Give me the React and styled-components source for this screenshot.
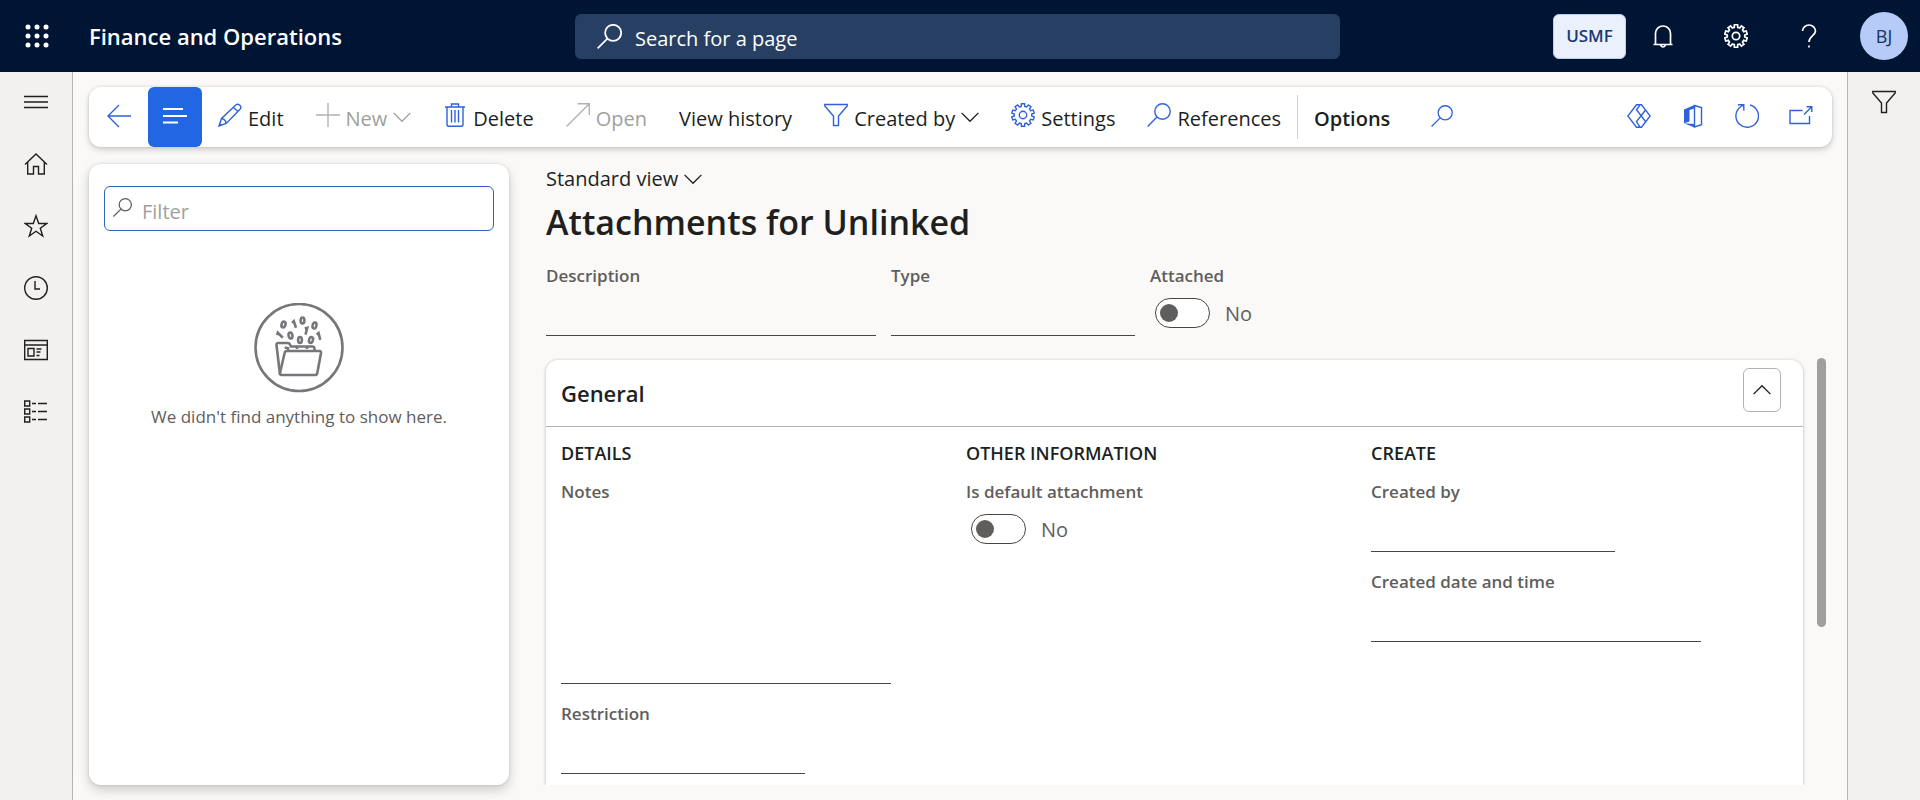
import React, { useState } from "react";
import styled, { createGlobalStyle } from "styled-components";

const GlobalStyle = createGlobalStyle`
  *, *::before, *::after { box-sizing: border-box; }
  body {
    margin: 0;
    background: #faf9f8;
    color: #201f1e;
    font-family: "Open Sans", "Noto Sans", sans-serif;
    font-size: 20px;
    line-height: 28px;
  }
  button, input, textarea { font: inherit; color: inherit; }
  button { margin: 0; padding: 0; border: 0; background: none; cursor: pointer; }
  h1, h2, h3, p { margin: 0; }
`;

const Svg = styled.svg`
  display: block;
  flex: none;
  fill: none;
  stroke: currentColor;
  stroke-width: ${(p) => p.$weight || 1.4};
`;

const GEAR = (() => {
  const pts = [];
  const teeth = 10;
  for (let i = 0; i < teeth; i++) {
    const a = (i / teeth) * Math.PI * 2 - Math.PI / 2;
    [[-0.2, 8.8], [-0.14, 11.4], [0.14, 11.4], [0.2, 8.8]].forEach(([d, r]) => {
      pts.push(`${(12 + r * Math.cos(a + d)).toFixed(2)} ${(12 + r * Math.sin(a + d)).toFixed(2)}`);
    });
  }
  return `M${pts.join("L")}Z`;
})();

const ICONS = {
  back: <path d="M24 12H1.500M12 1L1 12L12 23" />,
  lines: <path d="M0 5H20M0 12H24M0 18.500H15" />,
  pencil: <path d="M1 23L3.500 15.500L17.500 2.200C20.500 -.3 24.500 3.300 22 6.300L8.200 20.500ZM3.500 15.500C6 15.800 7.700 17.800 8.200 20.500M15.300 4.300L20 8.600M1.500 20.500L3.500 22.500" />,
  plus: <path d="M12 0V24M0 12H24" />,
  trash: <path d="M2 4H22M8.500 4V1H15.500V4M4 4V21.500Q4 23.300 6 23.300H18Q20 23.300 20 21.500V4M8.500 7V19.500M12 7V19.500M15.500 7V19.500" />,
  open: <path d="M.5 23.500L23.300 .7M11.500 .7H23.300V12" />,
  funnel: <path d="M.8 1.500H23.200V3L14.500 13V22.500H9.500V13L.8 3Z" />,
  gear: <><path d={GEAR} /><circle cx="12" cy="12" r="3.700" /></>,
  search: <><circle cx="15.500" cy="8.500" r="7.700" /><path d="M10 14L.6 23.400" /></>,
  chevron: <path d="M.8 6.500L12 17.700L23.200 6.500" />,
  chevronUp: <path d="M.8 17.500L12 6.300L23.200 17.500" />,
  diamonds: <path d="M9.500 .8L.8 12L9.500 23.200H14.500L23.200 12L14.500 .8ZM13 .8L9.500 5.800L18.500 17.500M18.500 6L9.500 17.500L13 23.200" />,
  office: (
    <>
      <path d="M3 5.500L13.500 1V4.500L8.500 6V17.500L3 19.300Z" fill="currentColor" stroke="none" />
      <path d="M3 19.300L13.500 20V23.500Z" fill="currentColor" stroke="none" />
      <path d="M13.500 1.500L20.500 3.500V20.700L13.500 23Z" />
    </>
  ),
  refresh: <path d="M15 1A11.300 11.300 0 1 1 6 2.500L8.800 1M3 .8H8.800V6.500" />,
  popout: <path d="M13.500 6.500H1V19.500H20.500V12M15 10.500L22.500 3M17.500 2.800H22.800V8" />,
  menu: <path d="M0 6.500H24M0 12H24M0 17.500H24" />,
  home: <path d="M1 12.500L12 2L23 12.500M3.700 10V22H9.500V14.500H14.500V22H20.300V10" />,
  star: <path d="M12 1.800L14.700 9.500H22.700L16.300 14.300L18.700 22L12 17.300L5.300 22L7.700 14.300L1.300 9.500H9.300Z" />,
  clock: <><circle cx="12" cy="12" r="11.300" /><path d="M11 5V13H16" /></>,
  workspace: <path d="M.7 2.500H23.300V21.500H.7ZM.7 7H23.300M4 10.500H10V18H4ZM12.500 11H17.500M12.500 14H16.500M12.500 17.500H15.500" />,
  modules: <path d="M.7 1H5.700V6H.7ZM.7 9H5.700V14H.7ZM.7 17H5.700V22H.7ZM8 3.500H12M14 3.500H23M8 11.500H12M14 11.500H23M8 19.500H12M14 19.500H23" />,
  bell: <path d="M2.500 20.500H21.500M4.500 20V9.500A7.500 7.500 0 0 1 19.500 9.500V20M9.500 21Q12 25 14.500 21" />,
  help: <path d="M5.500 7A6.500 6 0 0 1 18.500 7C18.500 11.500 12 12 12 18M12 21.500V23.500" />,
};

const Icon = ({ name, size = 24, weight }) => (
  <Svg viewBox="0 0 24 24" width={size} height={size} $weight={weight} aria-hidden="true">
    {ICONS[name]}
  </Svg>
);

const Page = styled.div`
  display: flex;
  flex-direction: column;
  min-height: 100vh;
`;

const Header = styled.header`
  display: grid;
  grid-template-columns: 575px minmax(240px, 765px) 1fr;
  align-items: center;
  height: 72px;
  background: #001433;
  color: #fff;
`;

const Brand = styled.div`
  display: flex;
  align-items: center;
`;

const HeaderButton = styled.button`
  display: grid;
  place-items: center;
  width: 73px;
  height: 72px;
`;

const Product = styled.a`
  padding-left: 16px;
  color: #fff;
  font-size: 22px;
  font-weight: 600;
  text-decoration: none;
`;

const GlobalSearch = styled.label`
  display: flex;
  align-items: center;
  gap: 13px;
  height: 45px;
  padding: 0 22px;
  border-radius: 6px;
  background: #283f64;
`;

const SearchInput = styled.input`
  flex: 1;
  min-width: 0;
  height: 43px;
  padding: 5px 0 0;
  border: 0;
  outline: 0;
  background: none;
  &::placeholder { color: ${(p) => p.$hint || "#fff"}; opacity: 1; }
`;

const Account = styled.div`
  display: flex;
  align-items: center;
  justify-content: flex-end;
  padding-right: 12px;
`;

const Company = styled.button`
  width: 73px;
  height: 45px;
  border: 1px solid #b9cdf5;
  border-radius: 6px;
  background: #ebf1fc;
  color: #1b3a73;
  font-size: 17px;
  font-weight: 600;
`;

const Avatar = styled.button`
  width: 48px;
  height: 48px;
  margin-left: 15px;
  border-radius: 50%;
  background: #b6cbf7;
  color: #1b3158;
  font-size: 18px;
`;

const Body = styled.div`
  display: flex;
  flex: 1;
`;

const Rail = styled.nav`
  display: flex;
  flex-direction: column;
  flex: none;
  gap: 2px;
  width: 73px;
  background: #f2f1f0;
  border-${(p) => p.$edge}: 1px solid #b5b3b1;
`;

const RailButton = styled.button`
  display: grid;
  place-items: center;
  height: 60px;
`;

const Main = styled.main`
  display: flex;
  flex: 1;
  flex-direction: column;
  gap: 17px;
  min-width: 0;
  padding: 15px 15px 15px 16px;
`;

const CommandBar = styled.div`
  display: flex;
  height: 60px;
  border-radius: 12px;
  background: #fff;
  box-shadow: 0 0 3px rgba(0, 0, 0, 0.14), 0 3px 6px rgba(0, 0, 0, 0.16);
`;

const Command = styled.button`
  display: flex;
  align-items: center;
  gap: 6px;
  padding: 0 16px;
  color: ${(p) => (p.disabled ? "#a19f9d" : "#201f1e")};
  font-weight: ${(p) => (p.$strong ? 600 : 400)};
  white-space: nowrap;
`;

const CommandIcon = styled.span`
  padding-bottom: 4px;
  color: ${(p) => (p.$muted ? "#b3b1af" : "#2f62d9")};
`;

const CommandText = styled.span`
  padding-top: 4px;
`;

const IconCommand = styled.button`
  display: grid;
  place-items: center;
  width: ${(p) => p.$width || 54}px;
  padding-bottom: 3px;
  border-radius: 6px;
  background: ${(p) => (p.$active ? "#2266e3" : "none")};
  color: ${(p) => (p.$active ? "#fff" : "#2f62d9")};
`;

const Divider = styled.span`
  width: 1px;
  margin: 8px 0;
  background: #d2d0ce;
`;

const Tail = styled.div`
  display: flex;
  margin-left: auto;
  padding-right: 4px;
`;

const Columns = styled.div`
  display: flex;
  flex: 1;
  gap: 37px;
`;

const ListPanel = styled.aside`
  flex: none;
  width: 420px;
  padding: 22px 15px;
  border-radius: 12px;
  background: #fff;
  box-shadow: 0 0 3px rgba(0, 0, 0, 0.14), 0 5px 12px rgba(0, 0, 0, 0.18);
`;

const FilterBox = styled.label`
  display: flex;
  align-items: center;
  gap: 10px;
  height: 45px;
  padding: 0 8px;
  border: 1px solid #2f62c0;
  border-radius: 6px;
  color: #605e5c;
`;

const FilterIcon = styled.span`
  padding-bottom: 2px;
`;

const Empty = styled.div`
  display: flex;
  flex-direction: column;
  align-items: center;
  gap: 10px;
  padding-top: 72px;
  color: #605e5c;
  font-size: 17px;
`;

const Form = styled.section`
  display: flex;
  flex: 1;
  flex-direction: column;
  min-width: 0;
`;

const ViewButton = styled.button`
  display: flex;
  align-items: center;
  align-self: flex-start;
  gap: 6px;
  height: 30px;
`;

const Title = styled.h1`
  margin: 4px 0 18px;
  font-size: 34px;
  font-weight: 600;
  line-height: 48px;
`;

const Summary = styled.div`
  display: flex;
  gap: 15px;
`;

const Field = styled.div`
  display: flex;
  flex-direction: column;
  width: ${(p) => p.$width || 244}px;
  max-width: 100%;
`;

const Label = styled.label`
  color: #605e5c;
  font-size: 17px;
  font-weight: 600;
  line-height: 24px;
`;

const TextInput = styled.input`
  height: 48px;
  padding: 12px 0 0;
  border: 0;
  border-bottom: 1px solid #484644;
  border-radius: 0;
  outline: 0;
  background: none;
`;

const TextArea = styled(TextInput)`
  height: 180px;
  resize: none;
`;

const ToggleRow = styled.span`
  display: flex;
  align-items: center;
  gap: 15px;
  margin: 9px 0 0 5px;
  color: #605e5c;
`;

const Toggle = styled.input`
  display: flex;
  align-items: center;
  appearance: none;
  width: 55px;
  height: 30px;
  margin: 0;
  padding: 0 4px;
  border: 1px solid #484644;
  border-radius: 15px;
  background: #fff;
  &::before {
    content: "";
    width: 18px;
    height: 18px;
    border-radius: 50%;
    background: #605e5c;
  }
  &:checked { justify-content: flex-end; }
`;

const ToggleText = styled.span`
  padding-top: 3px;
`;

const ScrollRow = styled.div`
  display: flex;
  flex: 1;
  gap: 14px;
  margin-top: 22px;
  padding-right: 6px;
`;

const Card = styled.section`
  flex: 1;
  min-width: 0;
  margin-top: 2px;
  border-radius: 12px 12px 0 0;
  background: #fff;
  box-shadow: 0 0 3px rgba(0, 0, 0, 0.18), 0 2px 4px rgba(0, 0, 0, 0.12);
  clip-path: inset(-8px -8px 0 -8px);
`;

const CardHeader = styled.div`
  display: flex;
  align-items: center;
  justify-content: space-between;
  height: 67px;
  padding: 0 22px 6px 15px;
  border-bottom: 1px solid #b5b3b1;
`;

const CardTitle = styled.h2`
  padding-top: 6px;
  font-size: 22px;
  font-weight: 600;
`;

const Collapse = styled.button`
  display: grid;
  place-items: center;
  width: 38px;
  height: 44px;
  border: 1px solid #b5b3b1;
  border-radius: 6px;
`;

const CardGrid = styled.div`
  display: grid;
  grid-template-columns: repeat(3, 1fr);
  padding: 14px 27px 9px 15px;
`;

const Group = styled.div`
  display: flex;
  flex-direction: column;
  gap: 18px;
`;

const GroupTitle = styled.h3`
  margin-bottom: -3px;
  font-size: 18px;
  font-weight: 600;
  line-height: 24px;
  text-transform: uppercase;
`;

const Track = styled.div`
  width: 9px;
`;

const Thumb = styled.div`
  height: 63%;
  border-radius: 5px;
  background: #a09f9e;
`;

const Launcher = () => (
  <svg width="24" height="24" viewBox="0 0 24 24" fill="#fff" aria-hidden="true">
    {[3, 12, 21].flatMap((y) => [3, 12, 21].map((x) => <circle key={`${x}-${y}`} cx={x} cy={y} r="2.500" />))}
  </svg>
);

const ZEROS = [[29.5, 21.5, 18], [48.500, 17.500, 0], [60.500, 22.500, 14], [36.500, 32.500, -10], [46, 37, 0], [57, 37, 18]];
const ONES = [[40.500, 21.500, -18], [26, 32.500, -45], [52, 28, 14], [65, 33.500, -14]];

const EmptyArt = () => (
  <Svg width="90" height="90" viewBox="0 0 90 90" $weight="2.6" color="#77767b" aria-hidden="true">
    <circle cx="45" cy="44.500" r="43.500" />
    {ZEROS.map(([x, y, r]) => (
      <ellipse key={`z${x}`} cx={x} cy={y} rx="1.900" ry="3" transform={`rotate(${r} ${x} ${y})`} />
    ))}
    {ONES.map(([x, y, r]) => (
      <path key={`o${x}`} d={`M${x - 1.8} ${y - 2.2}L${x + 0.4} ${y - 3.4}V${y + 3.6}`} transform={`rotate(${r} ${x} ${y})`} />
    ))}
    <path d="M26 71.500L22.500 42Q22.300 40 24.300 40H33.500Q35.500 40 36 41.500L37 43.500H58.500Q60.500 43.500 60.500 46V47.500" />
    <path d="M27.500 72H61Q63 72 63.300 70L67 50Q67.300 48 65.300 48H33Q31 48 30.600 50L26 70Q25.700 72 27.500 72Z" />
    <path d="M32 46V43.500M34 47V44M43 46V44M53 46V44" />
  </Svg>
);

const Cmd = ({ icon, text, disabled, menu, strong }) => (
  <Command type="button" disabled={disabled} $strong={strong}>
    {icon && <CommandIcon $muted={disabled}><Icon name={icon} /></CommandIcon>}
    <CommandText>{text}</CommandText>
    {menu && <Icon name="chevron" size={18} weight={1.8} />}
  </Command>
);

const InputField = ({ id, label, width }) => (
  <Field $width={width}>
    <Label htmlFor={id}>{label}</Label>
    <TextInput id={id} type="text" />
  </Field>
);

const ToggleField = ({ id, label }) => {
  const [on, setOn] = useState(false);
  return (
    <Field>
      <Label htmlFor={id}>{label}</Label>
      <ToggleRow>
        <Toggle id={id} type="checkbox" role="switch" checked={on} onChange={() => setOn(!on)} />
        <ToggleText>{on ? "Yes" : "No"}</ToggleText>
      </ToggleRow>
    </Field>
  );
};

const NAV = [
  ["menu", "Expand navigation"],
  ["home", "Home"],
  ["star", "Favorites"],
  ["clock", "Recent"],
  ["workspace", "Workspaces"],
  ["modules", "Modules"],
];

export default function App() {
  return (
    <>
      <GlobalStyle />
      <Page>
        <Header>
          <Brand>
            <HeaderButton type="button" aria-label="App launcher"><Launcher /></HeaderButton>
            <Product href="#home">Finance and Operations</Product>
          </Brand>
          <GlobalSearch>
            <Icon name="search" size={25} weight={1.7} />
            <SearchInput type="text" placeholder="Search for a page" aria-label="Search for a page" />
          </GlobalSearch>
          <Account>
            <Company type="button">USMF</Company>
            <HeaderButton type="button" aria-label="Notifications"><Icon name="bell" weight={1.7} /></HeaderButton>
            <HeaderButton type="button" aria-label="Settings"><Icon name="gear" weight={1.7} /></HeaderButton>
            <HeaderButton type="button" aria-label="Help"><Icon name="help" weight={1.7} /></HeaderButton>
            <Avatar type="button" aria-label="Account">BJ</Avatar>
          </Account>
        </Header>
        <Body>
          <Rail $edge="right" aria-label="Navigation">
            {NAV.map(([icon, label]) => (
              <RailButton key={icon} type="button" aria-label={label}><Icon name={icon} /></RailButton>
            ))}
          </Rail>
          <Main>
            <CommandBar role="toolbar">
              <IconCommand type="button" $width={59} aria-label="Back"><Icon name="back" /></IconCommand>
              <IconCommand type="button" $active aria-label="Show list"><Icon name="lines" weight={2} /></IconCommand>
              <Cmd icon="pencil" text="Edit" />
              <Cmd icon="plus" text="New" disabled menu />
              <Cmd icon="trash" text="Delete" />
              <Cmd icon="open" text="Open" disabled />
              <Cmd text="View history" />
              <Cmd icon="funnel" text="Created by" menu />
              <Cmd icon="gear" text="Settings" />
              <Cmd icon="search" text="References" />
              <Divider />
              <Cmd text="Options" strong />
              <IconCommand type="button" $width={72} aria-label="Search actions"><Icon name="search" size={22} /></IconCommand>
              <Tail>
                <IconCommand type="button" aria-label="Power Apps"><Icon name="diamonds" /></IconCommand>
                <IconCommand type="button" aria-label="Open in Office"><Icon name="office" /></IconCommand>
                <IconCommand type="button" aria-label="Refresh"><Icon name="refresh" /></IconCommand>
                <IconCommand type="button" aria-label="Open in new window"><Icon name="popout" /></IconCommand>
              </Tail>
            </CommandBar>
            <Columns>
              <ListPanel>
                <FilterBox>
                  <FilterIcon><Icon name="search" size={19} weight={1.6} /></FilterIcon>
                  <SearchInput $hint="#a19f9d" type="text" placeholder="Filter" aria-label="Filter" />
                </FilterBox>
                <Empty>
                  <EmptyArt />
                  <p>We didn't find anything to show here.</p>
                </Empty>
              </ListPanel>
              <Form>
                <ViewButton type="button">Standard view<Icon name="chevron" size={18} weight={1.8} /></ViewButton>
                <Title>Attachments for Unlinked</Title>
                <Summary>
                  <InputField id="description" label="Description" width={330} />
                  <InputField id="type" label="Type" />
                  <ToggleField id="attached" label="Attached" />
                </Summary>
                <ScrollRow>
                  <Card>
                    <CardHeader>
                      <CardTitle>General</CardTitle>
                      <Collapse type="button" aria-label="Collapse General"><Icon name="chevronUp" size={18} weight={1.8} /></Collapse>
                    </CardHeader>
                    <CardGrid>
                      <Group>
                        <GroupTitle>Details</GroupTitle>
                        <Field $width={330}>
                          <Label htmlFor="notes">Notes</Label>
                          <TextArea as="textarea" id="notes" />
                        </Field>
                        <InputField id="restriction" label="Restriction" />
                      </Group>
                      <Group>
                        <GroupTitle>Other information</GroupTitle>
                        <ToggleField id="default-attachment" label="Is default attachment" />
                      </Group>
                      <Group>
                        <GroupTitle>Create</GroupTitle>
                        <InputField id="created-by" label="Created by" />
                        <InputField id="created-date" label="Created date and time" width={330} />
                      </Group>
                    </CardGrid>
                  </Card>
                  <Track><Thumb /></Track>
                </ScrollRow>
              </Form>
            </Columns>
          </Main>
          <Rail $edge="left" aria-label="Related information">
            <RailButton type="button" aria-label="Filters"><Icon name="funnel" /></RailButton>
          </Rail>
        </Body>
      </Page>
    </>
  );
}
